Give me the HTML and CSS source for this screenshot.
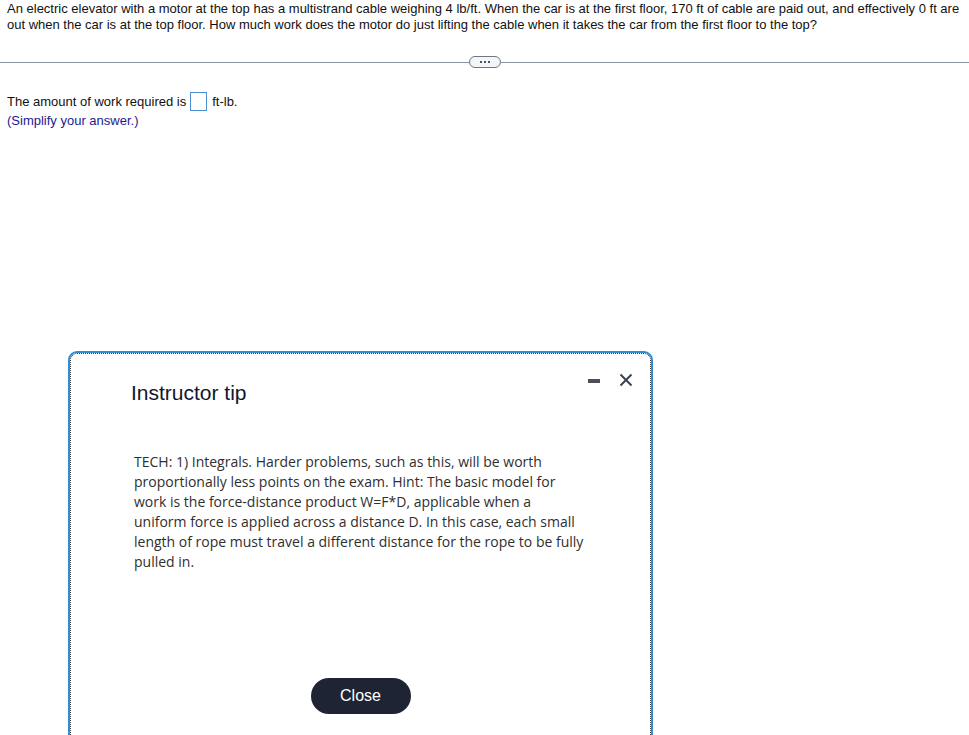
FILE: index.html
```html
<!DOCTYPE html>
<html lang="en">
<head>
    <meta charset="UTF-8">
    <title>Question</title>
    <link rel="stylesheet" href="styles.css">
</head>
<body>
    <div class="question">
        An electric elevator with a motor at the top has a multistrand cable weighing 4 lb/ft. When the car is at the first floor, 170 ft of cable are paid out, and effectively 0 ft are out when the car is at the top floor. How much work does the motor do just lifting the cable when it takes the car from the first floor to the top?
    </div>
    <div class="divider">
        <div class="divider-line"></div>
        <div class="more-btn"><span></span><span></span><span></span></div>
        <div class="divider-line"></div>
    </div>
    <div class="answer">
        <div class="answer-row">The amount of work required is <span class="answer-box"></span> ft-lb.</div>
        <div class="hint">(Simplify your answer.)</div>
    </div>

    <div class="tip-dialog">
        <div class="tip-header">
            <div class="tip-title">Instructor tip</div>
            <div class="tip-controls">
                <span class="tip-min"></span>
                <svg class="tip-close" width="14" height="14" viewBox="0 0 14 14">
                    <path d="M1.5 1.5 L12.5 12.5 M12.5 1.5 L1.5 12.5" stroke="#3c4350" stroke-width="2" fill="none"/>
                </svg>
            </div>
        </div>
        <div class="tip-body">
            TECH: 1) Integrals. Harder problems, such as this, will be worth proportionally less points on the exam. Hint: The basic model for work is the force-distance product W=F*D, applicable when a uniform force is applied across a distance D. In this case, each small length of rope must travel a different distance for the rope to be fully pulled in.
        </div>
        <div class="tip-footer">
            <button class="close-btn">Close</button>
        </div>
    </div>
</body>
</html>
```

FILE: styles.css
```css
* {
    margin: 0;
    box-sizing: border-box;
}

body {
    font-family: "Liberation Sans", Arial, sans-serif;
    background-color: white;
    color: #1a1a1a;
    overflow: hidden;
    height: 735px;
}

.question {
    padding: 1px 7px 0 7px;
    font-size: 13px;
    line-height: 16px;
    color: #111;
}

.divider {
    display: flex;
    align-items: center;
    margin-top: 23px;
    height: 12px;
}

.divider-line {
    flex: 1;
    height: 1px;
    background-color: #8a94a3;
}

.more-btn {
    width: 32px;
    height: 12px;
    border: 1px solid #6d7684;
    border-radius: 6px;
    background-color: #f3f5f8;
    display: flex;
    justify-content: center;
    align-items: center;
    gap: 2px;
}

.more-btn span {
    width: 2px;
    height: 2px;
    background-color: #4a5260;
}

.answer {
    padding: 23px 7px 0 7px;
    font-size: 13px;
    color: #111;
}

.answer-row {
    display: flex;
    align-items: center;
    height: 20px;
}

.answer-box {
    display: inline-block;
    width: 17px;
    height: 19px;
    border: 1px solid #4c8fd0;
    margin: 0 5px 0 4px;
}

.hint {
    color: #1b1b8f;
    line-height: 18px;
    margin-top: 1px;
}

.tip-dialog {
    position: absolute;
    left: 68px;
    top: 351px;
    width: 585px;
    height: 400px;
    background-color: white;
    border: 2px solid #2f8fd6;
    border-radius: 9px 9px 0 0;
    outline: 1px dotted #3a3a3a;
    outline-offset: -3px;
    padding: 18px 18px 0 61px;
}

.tip-header {
    display: flex;
    justify-content: space-between;
    align-items: flex-start;
}

.tip-title {
    font-size: 21px;
    color: #111630;
    margin-top: 10px;
}

.tip-controls {
    display: flex;
    align-items: center;
    gap: 19px;
    margin-top: 2px;
}

.tip-min {
    width: 12px;
    height: 4px;
    background-color: #4a4f58;
    margin-top: 2px;
}

.tip-close {
    display: block;
}

.tip-body {
    margin-top: 47px;
    margin-left: 3px;
    width: 453px;
    font-family: "Open Sans", sans-serif;
    font-size: 14px;
    line-height: 20px;
    color: #2f2f2f;
}

.tip-footer {
    display: flex;
    justify-content: center;
    margin-top: 106px;
    padding-right: 43px;
}

.close-btn {
    width: 100px;
    height: 36px;
    border: none;
    border-radius: 18px;
    background-color: #1e2433;
    color: white;
    font-family: "Liberation Sans", Arial, sans-serif;
    font-size: 16px;
}
```
